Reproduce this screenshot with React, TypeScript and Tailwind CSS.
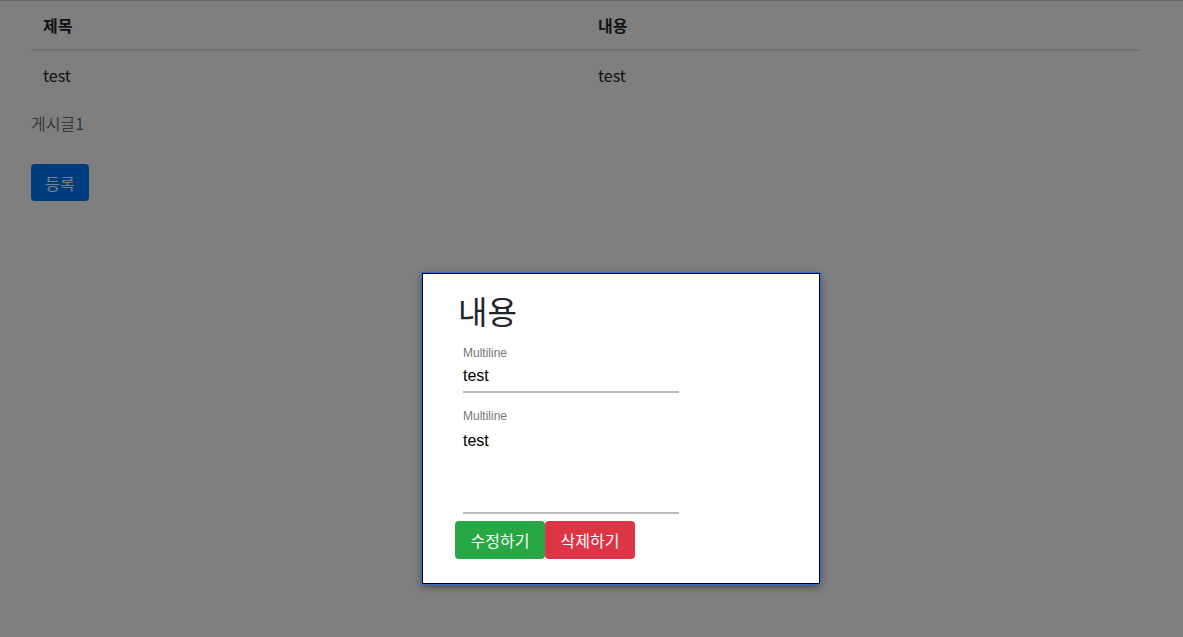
import React from "react";

const font = "font-['Noto_Sans_CJK_KR','Liberation_Sans',sans-serif]";

function Field({ value, rows = 1 }: { value: string; rows?: number }) {
  return (
    <div className="w-[216px] flex flex-col">
      <label className="text-[12px] leading-[14px] text-[#757575] font-['Liberation_Sans',sans-serif]">
        Multiline
      </label>
      <div
        className={`mt-[3px] text-[16px] leading-[19px] text-black font-['Liberation_Sans',sans-serif] border-b-2 border-[#bdbdbd] ${
          rows > 1 ? "h-[88px] pt-[5px]" : "h-[30px] pt-[3px]"
        }`}
      >
        {value}
      </div>
    </div>
  );
}

export default function App() {
  return (
    <div className={`relative w-[1183px] h-[637px] bg-white overflow-hidden ${font}`}>
      <div className="px-[31px] pt-[1px]">
        <table className="w-[1110px] text-[16px] text-[#212529] border-collapse">
          <thead>
            <tr className="border-b-2 border-[#dee2e6]">
              <th className="w-1/2 text-left font-bold px-[12px] h-[49px] align-middle">제목</th>
              <th className="w-1/2 text-left font-bold px-[12px] h-[49px] align-middle">내용</th>
            </tr>
          </thead>
          <tbody>
            <tr>
              <td className="px-[12px] h-[49px] align-middle">test</td>
              <td className="px-[12px] h-[49px] align-middle">test</td>
            </tr>
          </tbody>
        </table>
        <p className="mt-[12px] text-[16px] leading-[24px] text-[#6c757d]">게시글1</p>
        <button className="mt-[29px] h-[37px] w-[58px] rounded-[4px] bg-[#007bff] text-white text-[16px]">
          등록
        </button>
      </div>

      {/* backdrop */}
      <div className="absolute inset-0 bg-black/50 border-t border-[#6a6a6a]" />

      {/* modal */}
      <div className="absolute left-[422px] top-[273px] w-[398px] h-[311px] bg-white border border-black ring-1 ring-[#2d6ddb] shadow-[0_3px_8px_rgba(0,0,0,0.45)] pl-[32px] pt-[14px]">
        <h2 className="ml-[3px] text-[32px] leading-[44px] text-[#212529]">내용</h2>
        <div className="ml-[8px] mt-[14px] flex flex-col gap-[16px]">
          <Field value="test" />
          <Field value="test" rows={4} />
        </div>
        <div className="mt-[7px] flex">
          <button className="w-[90px] h-[38px] rounded-[4px] bg-[#28a745] text-white text-[16px]">수정하기</button>
          <button className="w-[90px] h-[38px] rounded-[4px] bg-[#dc3545] text-white text-[16px]">삭제하기</button>
        </div>
      </div>
    </div>
  );
}
